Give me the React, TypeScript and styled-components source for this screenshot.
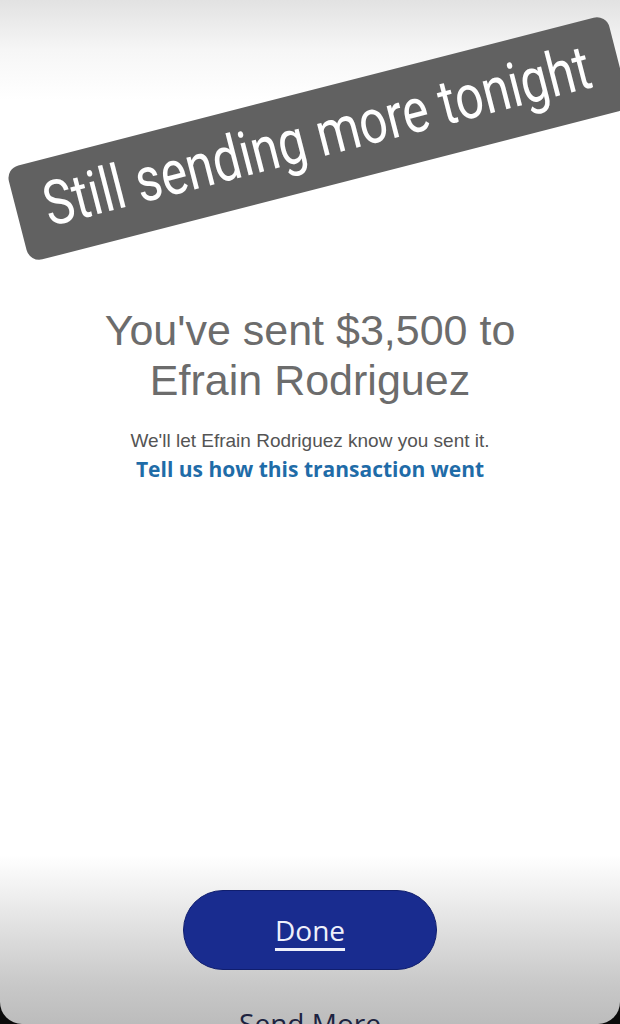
import React from 'react'
import styled, { createGlobalStyle } from 'styled-components'

const GlobalStyle = createGlobalStyle`
  html, body {
    margin: 0;
    padding: 0;
    background: #0b0b0b;
  }
`

const Screen = styled.div`
  position: relative;
  width: 620px;
  height: 1024px;
  overflow: hidden;
  display: flex;
  flex-direction: column;
  align-items: center;
  padding-top: 305px;
  box-sizing: border-box;
  border-radius: 0 0 22px 22px;
  background: linear-gradient(
    to bottom,
    #e2e2e2 0px,
    #f6f6f6 50px,
    #ffffff 100px,
    #ffffff 855px,
    #f1f1f1 890px,
    #dddddd 935px,
    #c8c8c8 985px,
    #bcbcbc 1024px
  );
`

const Sticker = styled.div`
  position: absolute;
  left: 8px;
  top: 90px;
  width: 620px;
  height: 97px;
  border-radius: 13px;
  background: #616161;
  transform: rotate(-14.4deg);
  display: flex;
  align-items: center;
  justify-content: center;
`

const StickerText = styled.span`
  display: inline-block;
  font-family: Roboto, "Noto Sans", sans-serif;
  font-size: 62px;
  line-height: 1;
  color: #ffffff;
  white-space: nowrap;
  transform: scaleX(0.8);
  margin-top: -6px;
`

const Heading = styled.h1`
  margin: 0;
  font-family: "Liberation Sans", Arial, sans-serif;
  font-weight: 400;
  font-size: 43px;
  line-height: 50px;
  color: #6c6c6c;
  text-align: center;
`

const Note = styled.p`
  margin: 24px 0 0;
  font-family: "Liberation Sans", Arial, sans-serif;
  font-size: 19px;
  line-height: 24px;
  color: #545454;
  text-align: center;
`

const FeedbackLink = styled.a`
  margin-top: 2px;
  font-family: "Open Sans", "Noto Sans", sans-serif;
  font-weight: 700;
  font-size: 21px;
  line-height: 28px;
  color: #1f6ca8;
  text-decoration: none;
`

const Footer = styled.div`
  margin-top: auto;
  margin-bottom: -17px;
  display: flex;
  flex-direction: column;
  align-items: center;
  gap: 35px;
`

const DoneButton = styled.button`
  width: 254px;
  height: 80px;
  border-radius: 40px;
  border: 1px solid #101e6e;
  background: #192c8f;
  color: #eef0fb;
  font-family: "Open Sans", "Noto Sans", sans-serif;
  font-size: 28px;
  text-decoration: underline;
  text-decoration-thickness: 3px;
  text-underline-offset: 7px;
  cursor: pointer;
`

const SecondaryAction = styled.div`
  font-family: "Open Sans", "Noto Sans", sans-serif;
  font-size: 28px;
  line-height: 36px;
  color: #1d2340;
`

export default function App() {
  return (
    <>
      <GlobalStyle />
      <Screen>
        <Heading>
          You've sent $3,500 to
          <br />
          Efrain Rodriguez
        </Heading>
        <Note>We'll let Efrain Rodriguez know you sent it.</Note>
        <FeedbackLink href="#">Tell us how this transaction went</FeedbackLink>
        <Footer>
          <DoneButton>Done</DoneButton>
          <SecondaryAction>Send More</SecondaryAction>
        </Footer>
        <Sticker>
          <StickerText>Still sending more tonight</StickerText>
        </Sticker>
      </Screen>
    </>
  )
}
